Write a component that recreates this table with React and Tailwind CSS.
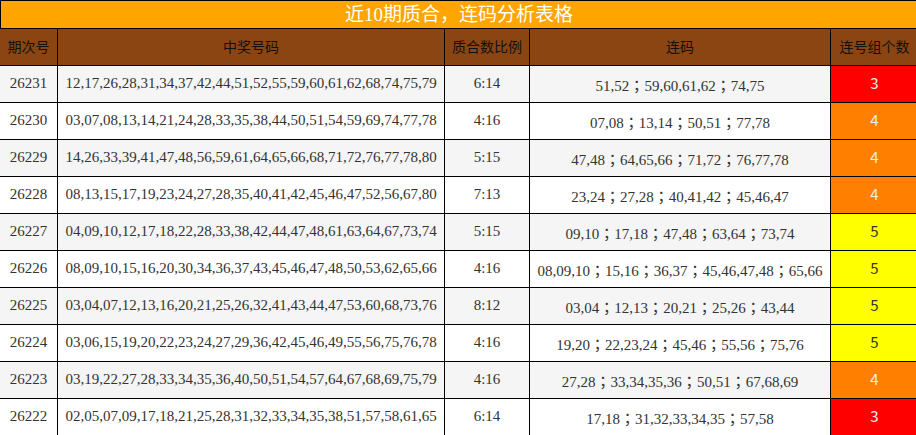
import React from 'react';

// 近10期质合、连码分析 — static snapshot of the last ten draws.
const ROWS = [
  { id: '26231', nums: '12,17,26,28,31,34,37,42,44,51,52,55,59,60,61,62,68,74,75,79', ratio: '6:14', runs: ['51,52', '59,60,61,62', '74,75'], count: 3 },
  { id: '26230', nums: '03,07,08,13,14,21,24,28,33,35,38,44,50,51,54,59,69,74,77,78', ratio: '4:16', runs: ['07,08', '13,14', '50,51', '77,78'], count: 4 },
  { id: '26229', nums: '14,26,33,39,41,47,48,56,59,61,64,65,66,68,71,72,76,77,78,80', ratio: '5:15', runs: ['47,48', '64,65,66', '71,72', '76,77,78'], count: 4 },
  { id: '26228', nums: '08,13,15,17,19,23,24,27,28,35,40,41,42,45,46,47,52,56,67,80', ratio: '7:13', runs: ['23,24', '27,28', '40,41,42', '45,46,47'], count: 4 },
  { id: '26227', nums: '04,09,10,12,17,18,22,28,33,38,42,44,47,48,61,63,64,67,73,74', ratio: '5:15', runs: ['09,10', '17,18', '47,48', '63,64', '73,74'], count: 5 },
  { id: '26226', nums: '08,09,10,15,16,20,30,34,36,37,43,45,46,47,48,50,53,62,65,66', ratio: '4:16', runs: ['08,09,10', '15,16', '36,37', '45,46,47,48', '65,66'], count: 5 },
  { id: '26225', nums: '03,04,07,12,13,16,20,21,25,26,32,41,43,44,47,53,60,68,73,76', ratio: '8:12', runs: ['03,04', '12,13', '20,21', '25,26', '43,44'], count: 5 },
  { id: '26224', nums: '03,06,15,19,20,22,23,24,27,29,36,42,45,46,49,55,56,75,76,78', ratio: '4:16', runs: ['19,20', '22,23,24', '45,46', '55,56', '75,76'], count: 5 },
  { id: '26223', nums: '03,19,22,27,28,33,34,35,36,40,50,51,54,57,64,67,68,69,75,79', ratio: '4:16', runs: ['27,28', '33,34,35,36', '50,51', '67,68,69'], count: 4 },
  { id: '26222', nums: '02,05,07,09,17,18,21,25,28,31,32,33,34,35,38,51,57,58,61,65', ratio: '6:14', runs: ['17,18', '31,32,33,34,35', '57,58'], count: 3 },
];

const COUNT_STYLE = {
  3: 'bg-[#ff0000] text-[#eeeeee]',
  4: 'bg-[#ff8000] text-[#eeeeee]',
  5: 'bg-[#ffff00] text-[#333333]',
};

const FONT = "font-['Liberation_Serif','Noto_Sans_CJK_SC',serif]";
const CJK = "font-['Noto_Sans_CJK_SC',sans-serif]";

// Run groups joined by a centred full-width semicolon (TC form).
function Runs({ runs }) {
  return runs.map((g, i) => (
    <React.Fragment key={i}>
      {i > 0 && <span className="font-['Noto_Sans_CJK_TC',sans-serif]">；</span>}
      {g}
    </React.Fragment>
  ));
}

export default function App() {
  return (
    <div className="w-[916px] h-[435px] overflow-hidden bg-white">
      <div
        className={`h-[29px] w-[918px] border border-black bg-[#ffa500] text-white text-[19px] leading-[27px] text-center ${FONT}`}
      >
        近10期质合，连码分析表格
      </div>
      <table
        className={`-ml-px w-[919px] border-collapse table-fixed text-[15px] text-[#333333] ${FONT}`}
      >
        <colgroup>
          <col className="w-[58px]" />
          <col className="w-[387px]" />
          <col className="w-[85px]" />
          <col className="w-[301px]" />
          <col className="w-[88px]" />
        </colgroup>
        <thead>
          <tr className={`h-[36px] bg-[#8b4513] text-[#111111] text-[14px] ${CJK}`}>
            {['期次号', '中奖号码', '质合数比例', '连码', '连号组个数'].map((h) => (
              <th key={h} className="border border-black border-t-0 font-normal p-0">
                {h}
              </th>
            ))}
          </tr>
        </thead>
        <tbody>
          {ROWS.map((r, i) => (
            <tr key={r.id} className={`h-[37px] ${i % 2 === 0 ? 'bg-[#f5f5f5]' : 'bg-white'}`}>
              <td className="border border-black text-center p-0">{r.id}</td>
              <td className="border border-black text-center p-0">{r.nums}</td>
              <td className="border border-black text-center p-0">{r.ratio}</td>
              <td className="border border-black text-center p-0 pt-[4px]">
                <Runs runs={r.runs} />
              </td>
              <td
                className={`border border-black text-center p-0 ${CJK} ${COUNT_STYLE[r.count]}`}
              >
                {r.count}
              </td>
            </tr>
          ))}
        </tbody>
      </table>
    </div>
  );
}
